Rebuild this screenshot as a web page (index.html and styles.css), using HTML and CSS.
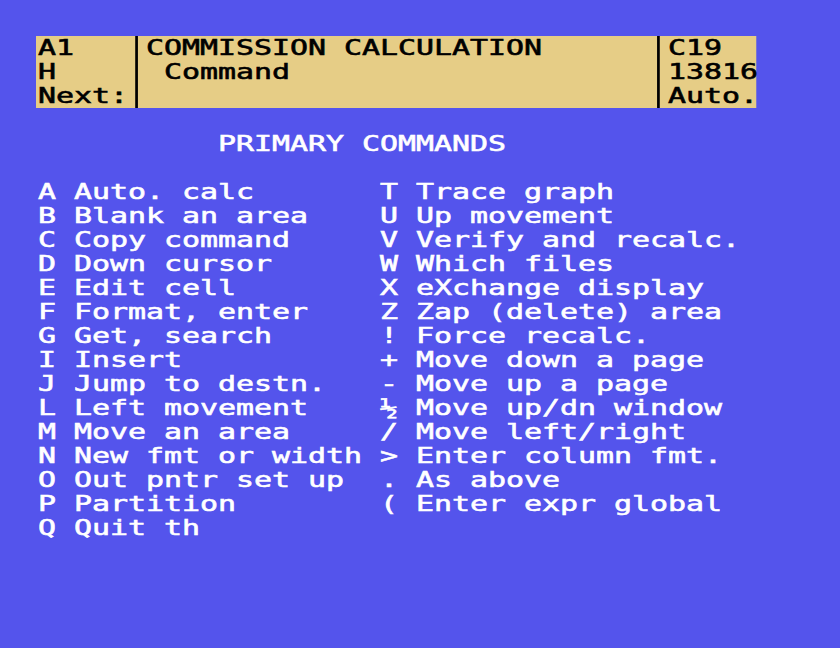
FILE: index.html
```html
<!DOCTYPE html>
<html>
<head>
<meta charset="utf-8">
<link rel="stylesheet" href="styles.css">
</head>
<body>
<div class="screen">
  <div class="grid40">
    <div class="status">
      <div class="hcol left"><div>A1</div><div>H</div><div>Next:</div></div>
      <div class="divider"></div>
      <div class="hcol mid"><div>COMMISSION CALCULATION</div><div> Command</div><div></div></div>
      <div class="divider"></div>
      <div class="hcol right"><div>C19</div><div>13816</div><div>Auto.</div></div>
    </div>
    <div class="title">PRIMARY COMMANDS</div>
    <div class="commands">
      <div class="row"><span>A</span><span>Auto. calc</span><span>T</span><span>Trace graph</span></div>
      <div class="row"><span>B</span><span>Blank an area</span><span>U</span><span>Up movement</span></div>
      <div class="row"><span>C</span><span>Copy command</span><span>V</span><span>Verify and recalc.</span></div>
      <div class="row"><span>D</span><span>Down cursor</span><span>W</span><span>Which files</span></div>
      <div class="row"><span>E</span><span>Edit cell</span><span>X</span><span>eXchange display</span></div>
      <div class="row"><span>F</span><span>Format, enter</span><span>Z</span><span>Zap (delete) area</span></div>
      <div class="row"><span>G</span><span>Get, search</span><span>!</span><span>Force recalc.</span></div>
      <div class="row"><span>I</span><span>Insert</span><span>+</span><span>Move down a page</span></div>
      <div class="row"><span>J</span><span>Jump to destn.</span><span>-</span><span>Move up a page</span></div>
      <div class="row"><span>L</span><span>Left movement</span><span>½</span><span>Move up/dn window</span></div>
      <div class="row"><span>M</span><span>Move an area</span><span>/</span><span>Move left/right</span></div>
      <div class="row"><span>N</span><span>New fmt or width</span><span>&gt;</span><span>Enter column fmt.</span></div>
      <div class="row"><span>O</span><span>Out pntr set up</span><span>.</span><span>As above</span></div>
      <div class="row"><span>P</span><span>Partition</span><span>(</span><span>Enter expr global</span></div>
      <div class="row"><span>Q</span><span>Quit th</span><span></span><span></span></div>
    </div>
  </div>
</div>
</body>
</html>
```
FILE: styles.css
```css
html, body {
  margin: 0;
  padding: 0;
}
body {
  background: #5454EC;
  width: 840px;
  height: 648px;
  overflow: hidden;
}
.screen {
  padding: 36px 0 0 36px;
}
.grid40 {
  font-family: "DejaVu Sans Mono", "Liberation Mono", monospace;
  font-size: 22px;
  line-height: 24px;
  width: 40ch;
  color: #FFFFFF;
  -webkit-text-stroke: 0.6px currentColor;
  transform: scaleX(1.359);
  transform-origin: 0 0;
}
.status {
  display: flex;
  background: #E6CD86;
  color: #000000;
  height: 72px;
}
.hcol {
  display: flex;
  flex-direction: column;
}
.hcol > div {
  height: 24px;
  white-space: pre;
  padding-left: 0.11ch;
}
.left, .right {
  width: 5ch;
}
.mid {
  width: 28ch;
}
.divider {
  width: 0.17ch;
  margin: 0 0.33ch 0 0.5ch;
  background: #000000;
}
.title {
  margin: 24px 0 0 10ch;
  height: 24px;
  white-space: pre;
  padding-left: 0.11ch;
}
.commands {
  margin-top: 24px;
}
.row {
  display: grid;
  grid-template-columns: 2ch 17ch 2ch 19ch;
  height: 24px;
}
.row > span {
  white-space: pre;
  padding-left: 0.11ch;
}
```
